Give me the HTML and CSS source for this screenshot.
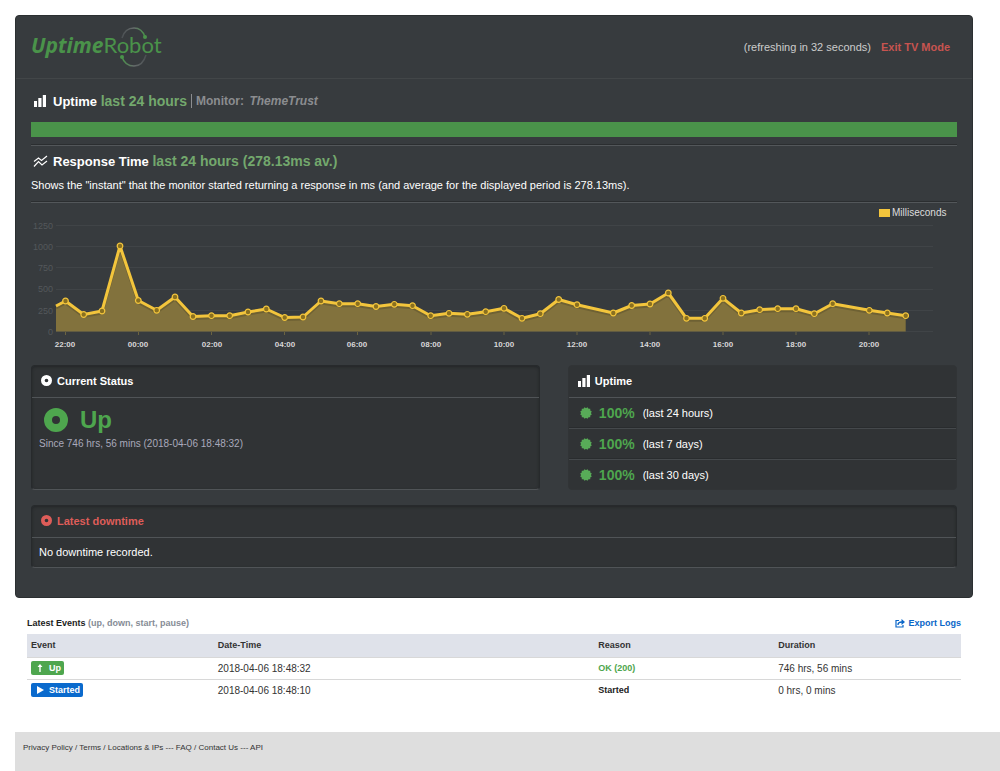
FILE: index.html
```
<!DOCTYPE html>
<html lang="en">
<head>
    <meta charset="UTF-8">
    <meta name="viewport" content="width=device-width, initial-scale=1">
    <title>Uptime Robot</title>
    <link rel="stylesheet" href="styles.css">
</head>
<body>
    <svg class="sprite" aria-hidden="true">
        <symbol id="bars" viewBox="0 0 12 12">
            <path d="M0 6h3v6H0zM4.300 3h3.200v9H4.300zM8.800 0H12v12H8.800z"/>
        </symbol>
        <symbol id="ring" viewBox="0 0 24 24">
            <path fill-rule="evenodd" d="M12 0a12 12 0 1 0 0 24 12 12 0 0 0 0-24zm0 8a4 4 0 1 1 0 8 4 4 0 0 1 0-8z"/>
        </symbol>
        <symbol id="badge" viewBox="0 0 24 24">
            <rect x="3.500" y="3.500" width="17" height="17"/>
            <rect x="3.500" y="3.500" width="17" height="17" transform="rotate(30 12 12)"/>
            <rect x="3.500" y="3.500" width="17" height="17" transform="rotate(60 12 12)"/>
        </symbol>
    </svg>

    <main class="tv">
        <header class="tv-header">
            <svg class="logo" viewBox="0 0 132 42" role="img" aria-label="UptimeRobot">
                <defs>
                    <linearGradient id="arcTop"><stop offset="0" stop-color="#4b5053"/><stop offset="0.500" stop-color="#666c6c"/><stop offset="1" stop-color="#4a934a"/></linearGradient>
                    <linearGradient id="arcBottom"><stop offset="0" stop-color="#4a934a"/><stop offset="0.500" stop-color="#666c6c"/><stop offset="1" stop-color="#4b5053"/></linearGradient>
                </defs>
                <path d="M91 12C93 5 98 2 103 2s9 3 11 9" fill="none" stroke="url(#arcTop)" stroke-width="1.500"/>
                <path d="M91 31c2 6 6 9 12 9s10-4 12-11" fill="none" stroke="url(#arcBottom)" stroke-width="1.500"/>
                <circle cx="114" cy="11" r="2"/>
                <circle cx="91" cy="31" r="2"/>
                <text x="0" y="27"><tspan class="logo-up">Uptime</tspan><tspan class="logo-robot">Robot</tspan></text>
            </svg>
            <div class="tv-mode">
                <span>(refreshing in 32 seconds)</span>
                <a href="#">Exit TV Mode</a>
            </div>
        </header>

        <section class="block">
            <h2>
                <svg class="icon"><use href="#bars"/></svg>
                <span>Uptime <b>last 24 hours</b></span>
                <span class="monitor">Monitor: <i>ThemeTrust</i></span>
            </h2>
            <div class="uptime-bar"></div>
        </section>

        <section class="block response">
            <h2>
                <svg class="icon wide" viewBox="0 0 15 12" fill="none" stroke="#fff">
                    <path d="M1 6.500l4.500-3.500 3 2.500L14 1" stroke-width="1.200"/>
                    <path d="M1 11.500l4.500-5 3.500 3.500 5-4" stroke-width="1.200"/>
                </svg>
                <span>Response Time <b>last 24 hours (278.13ms av.)</b></span>
            </h2>
            <p>Shows the "instant" that the monitor started returning a response in ms (and average for the displayed period is 278.13ms).</p>
        </section>

        <svg class="chart" viewBox="31 203 926 149" role="img" aria-label="Response time in milliseconds">
            <defs>
                <marker id="dot" viewBox="0 0 8 8" refX="4" refY="4" markerWidth="8" markerHeight="8" markerUnits="userSpaceOnUse">
                    <circle cx="4" cy="4" r="2.800" fill="#8a7020" stroke="#f3c53c" stroke-width="1.200"/>
                </marker>
            </defs>
            <path class="grid" d="M56 225.500H933M56 246.500H933M56 267.500H933M56 289.500H933M56 310.500H933M56 331.500H933"/>
            <g class="y-axis">
                <text x="53" y="229">1250</text>
                <text x="53" y="250">1000</text>
                <text x="53" y="271">750</text>
                <text x="53" y="292">500</text>
                <text x="53" y="314">250</text>
                <text x="53" y="335">0</text>
            </g>
            <path class="area" d="M56 306 65.500 301 83.700 314.500 102 311 120 246 138.300 300.500 156.700 310.300 175 297 193 316.500 211.500 315.700 229.700 315.700 248 312 266.300 309 284.700 317.500 303 317 321 301 339.300 303.700 357.700 303.700 376 306.500 394.300 304.300 412.500 305.700 430.700 315.700 449 313.300 467.300 314.300 485.700 311.700 504 308.300 522 318.300 540.300 313.700 558.700 299.500 577 304.700 613.300 313 631.700 305.500 650 304 668.300 293 686.500 318.300 704.700 318.300 723 298.300 741.300 313 759.700 309.700 777.700 308.700 796 308.700 814.300 313.700 832.700 303.700 869.300 310.300 887.300 313 905.700 315.700V331.500H56z"/>
            <polyline class="shade" points="56,308 65.500,303 83.700,316.500 102,313 120,248 138.300,302.500 156.700,312.300 175,299 193,318.500 211.500,317.700 229.700,317.700 248,314 266.300,311 284.700,319.500 303,319 321,303 339.300,305.700 357.700,305.700 376,308.500 394.300,306.300 412.500,307.700 430.700,317.700 449,315.300 467.300,316.300 485.700,313.700 504,310.300 522,320.300 540.300,315.700 558.700,301.500 577,306.700 613.300,315 631.700,307.500 650,306 668.300,295 686.500,320.300 704.700,320.300 723,300.300 741.300,315 759.700,311.700 777.700,310.700 796,310.700 814.300,315.700 832.700,305.700 869.300,312.300 887.300,315 905.700,317.700"/>
            <polyline class="line" points="56,306 65.500,301 83.700,314.500 102,311 120,246 138.300,300.500 156.700,310.300 175,297 193,316.500 211.500,315.700 229.700,315.700 248,312 266.300,309 284.700,317.500 303,317 321,301 339.300,303.700 357.700,303.700 376,306.500 394.300,304.300 412.500,305.700 430.700,315.700 449,313.300 467.300,314.300 485.700,311.700 504,308.300 522,318.300 540.300,313.700 558.700,299.500 577,304.700 613.300,313 631.700,305.500 650,304 668.300,293 686.500,318.300 704.700,318.300 723,298.300 741.300,313 759.700,309.700 777.700,308.700 796,308.700 814.300,313.700 832.700,303.700 869.300,310.300 887.300,313 905.700,315.700"/>
            <path class="ticks" d="M65.500 332v3M138.500 332v3M211.500 332v3M284.500 332v3M357.500 332v3M431 332v3M504 332v3M577 332v3M650 332v3M723 332v3M796 332v3M869 332v3"/>
            <g class="x-axis">
                <text x="65" y="347">22:00</text>
                <text x="138" y="347">00:00</text>
                <text x="212" y="347">02:00</text>
                <text x="285" y="347">04:00</text>
                <text x="357" y="347">06:00</text>
                <text x="431" y="347">08:00</text>
                <text x="504" y="347">10:00</text>
                <text x="577" y="347">12:00</text>
                <text x="650" y="347">14:00</text>
                <text x="723" y="347">16:00</text>
                <text x="796" y="347">18:00</text>
                <text x="869" y="347">20:00</text>
            </g>
            <rect x="879" y="209" width="11" height="8" fill="#f3c53c"/>
            <text class="legend" x="892" y="216">Milliseconds</text>
        </svg>

        <div class="cards">
            <section class="card">
                <h3><svg class="icon round"><use href="#ring"/></svg>Current Status</h3>
                <div class="status">
                    <strong><svg class="icon big"><use href="#ring"/></svg>Up</strong>
                    <span>Since 746 hrs, 56 mins (2018-04-06 18:48:32)</span>
                </div>
            </section>
            <section class="card flat">
                <h3><svg class="icon"><use href="#bars"/></svg>Uptime</h3>
                <ul>
                    <li><svg class="icon"><use href="#badge"/></svg><b>100%</b> (last 24 hours)</li>
                    <li><svg class="icon"><use href="#badge"/></svg><b>100%</b> (last 7 days)</li>
                    <li><svg class="icon"><use href="#badge"/></svg><b>100%</b> (last 30 days)</li>
                </ul>
            </section>
            <section class="card downtime">
                <h3><svg class="icon round"><use href="#ring"/></svg>Latest downtime</h3>
                <p>No downtime recorded.</p>
            </section>
        </div>
    </main>

    <section class="events">
        <div class="events-head">
            <h4>Latest Events <span>(up, down, start, pause)</span></h4>
            <a href="#">
                <svg viewBox="0 0 10 9" width="10" height="9" fill="none" stroke="#0a66c8">
                    <path d="M4 1.500H1v6.500h7V6" stroke-width="1.200"/>
                    <path d="M3 6c0-2 1.500-3 4-3" stroke-width="1.400"/>
                    <path d="M6.500 0L10 3 6.500 6z" fill="#0a66c8" stroke="none"/>
                </svg>
                Export Logs
            </a>
        </div>
        <table>
            <thead>
                <tr><th>Event</th><th>Date-Time</th><th>Reason</th><th>Duration</th></tr>
            </thead>
            <tbody>
                <tr>
                    <td><span class="tag up"><svg viewBox="0 0 8 8"><path d="M4 0L1.500 3H3.300V8H4.700V3H6.500z"/></svg>Up</span></td>
                    <td>2018-04-06 18:48:32</td>
                    <td class="ok">OK (200)</td>
                    <td>746 hrs, 56 mins</td>
                </tr>
                <tr>
                    <td><span class="tag started"><svg viewBox="0 0 8 8"><path d="M1 0L8 4 1 8z"/></svg>Started</span></td>
                    <td>2018-04-06 18:48:10</td>
                    <td class="start">Started</td>
                    <td>0 hrs, 0 mins</td>
                </tr>
            </tbody>
        </table>
    </section>

    <footer>
        <a href="#">Privacy Policy</a> / <a href="#">Terms</a> / <a href="#">Locations &amp; IPs</a> --- <a href="#">FAQ</a> / <a href="#">Contact Us</a> --- <a href="#">API</a>
    </footer>
</body>
</html>
```
FILE: styles.css
```
* {
    box-sizing: border-box;
}
body {
    margin: 0;
    min-height: 100vh;
    display: flex;
    flex-direction: column;
    background: #fff;
    color: #333;
    font-family: "Liberation Sans", Arial, sans-serif;
    font-size: 11px;
}
h2, h3, h4, p, ul {
    margin: 0;
    padding: 0;
}
a {
    color: inherit;
    text-decoration: none;
}
.sprite {
    position: absolute;
    width: 0;
    height: 0;
}
.icon {
    width: 12px;
    height: 12px;
    fill: currentColor;
    flex: none;
}

/* dark dashboard */
.tv {
    margin: 15px 27px 0 15px;
    padding: 0 15px 29px;
    background: #373b3e;
    border: 1px solid #2b2f31;
    border-radius: 4px;
    color: #fff;
}
.tv-header {
    display: flex;
    justify-content: space-between;
    align-items: center;
    height: 63px;
    margin: 0 -15px;
    padding: 0 22px 0 15px;
    border-bottom: 1px solid #424648;
}
.logo {
    width: 132px;
    height: 42px;
    fill: #4a934a;
}
.logo-up {
    font-family: "Open Sans", sans-serif;
    font-size: 21px;
    font-weight: 700;
    font-style: italic;
}
.logo-robot {
    font-family: Lato, sans-serif;
    font-size: 22px;
    font-weight: 400;
}
.tv-mode {
    display: flex;
    gap: 10px;
    color: #ccc;
}
.tv-mode a {
    color: #c75450;
    font-weight: bold;
}
h2 {
    display: flex;
    align-items: center;
    height: 16px;
    padding-left: 3px;
    font-size: 13px;
}
h2 .icon {
    margin-right: 7px;
}
h2 .wide {
    width: 15px;
    fill: none;
    margin: 0 5px 0 -1px;
}
h2 b {
    color: #73a86d;
    font-size: 14px;
}
.monitor {
    margin-left: 4px;
    padding-left: 4px;
    border-left: 1px solid #8b8d90;
    color: #8b8d90;
    font-size: 12px;
}
.monitor i {
    margin-left: 2px;
}
.block {
    padding: 14px 0 8px;
    border-bottom: 1px solid #53575a;
    box-shadow: inset 0 -1px #2b2e30;
}
.uptime-bar {
    height: 15px;
    margin-top: 13px;
    background: #4a934a;
}
.response {
    padding: 7px 0 10px;
}
.response p {
    margin-top: 9px;
    line-height: 14px;
}
.chart {
    display: block;
    width: 100%;
    font-size: 9px;
}
.grid {
    stroke: #404447;
}
.y-axis {
    fill: #54585b;
    text-anchor: end;
}
.x-axis {
    fill: #d8d8d8;
    font-size: 8px;
    font-weight: bold;
    text-anchor: middle;
}
.area {
    fill: #82723d;
}
.line {
    fill: none;
    stroke: #f3c53c;
    stroke-width: 3px;
    stroke-linejoin: round;
    marker-mid: url(#dot);
    marker-end: url(#dot);
}
.shade {
    fill: none;
    stroke: #000;
    stroke-opacity: 0.15;
    stroke-width: 3px;
}
.ticks {
    stroke: #6b6340;
}
.legend {
    fill: #ddd;
    font-size: 10px;
}

.cards {
    display: grid;
    grid-template-columns: 17fr 13fr;
    gap: 15px 28px;
    margin-top: 13px;
}
.card {
    background: #303335;
    border: 1px solid #272a2c;
    border-bottom-color: #505457;
    border-radius: 4px;
    box-shadow: inset 0 1px 3px #222527;
}
.card.flat {
    border-color: #313436;
    box-shadow: none;
}
h3 {
    display: flex;
    align-items: center;
    gap: 5px;
    height: 32px;
    padding: 0 9px 2px;
    border-bottom: 1px solid #505457;
    font-size: 11px;
}
h3 .round {
    width: 11px;
    height: 11px;
}
.status {
    height: 91px;
    padding: 8px 7px;
    color: #a9a9bb;
    font-size: 10px;
}
.status strong {
    display: flex;
    align-items: center;
    gap: 12px;
    height: 28px;
    padding-left: 5px;
    margin-bottom: 4px;
    color: #4ea64e;
    font-size: 24px;
}
.status .big {
    width: 24px;
    height: 24px;
}
.flat li {
    display: flex;
    align-items: center;
    height: 31px;
    padding: 0 11px;
    border-bottom: 1px solid #45494c;
    box-shadow: inset 0 -1px #292c2e;
}
.flat li:last-child {
    height: 29px;
    border: 0;
    box-shadow: none;
}
.flat li .icon {
    color: #58ab58;
}
.flat li b {
    margin: 0 8px 0 7px;
    color: #4ea64e;
    font-size: 14px;
}
.downtime {
    grid-column: 1 / -1;
}
.downtime h3 {
    color: #de5d59;
}
.downtime p {
    padding: 0 7px;
    line-height: 29px;
}

/* event log */
.events {
    margin: 18px 39px 31px 27px;
    font-size: 10px;
}
.events-head {
    display: flex;
    justify-content: space-between;
    align-items: center;
    height: 18px;
    padding-bottom: 4px;
    font-size: 9px;
}
h4 {
    color: #222;
    font-size: 9px;
}
h4 span {
    color: #868c96;
}
.events-head a {
    display: flex;
    align-items: center;
    gap: 3px;
    color: #0a66c8;
    font-weight: bold;
}
table {
    width: 100%;
    table-layout: fixed;
    border-collapse: collapse;
}
th, td {
    height: 23px;
    padding: 0 4px;
    text-align: left;
    border-bottom: 1px solid #d8d8d8;
}
td {
    height: 22px;
}
th {
    width: 20%;
    background: #dfe2ea;
    font-size: 9px;
}
th:nth-child(2) {
    width: auto;
}
th:nth-child(3) {
    width: 180px;
}
tbody tr:last-child td {
    border: 0;
}
.ok, .start {
    color: #222;
    font-size: 9px;
    font-weight: bold;
}
.ok {
    color: #4ea64e;
}
.tag {
    display: inline-flex;
    align-items: center;
    gap: 5px;
    height: 14px;
    padding: 0 3px 0 5px;
    border-radius: 2px;
    color: #fff;
    font-size: 9px;
    font-weight: bold;
    vertical-align: middle;
}
.tag svg {
    width: 8px;
    height: 8px;
    fill: #fff;
}
.up {
    background: #4ea64e;
}
.started {
    background: #0a6acd;
}
footer {
    flex: 1;
    margin-left: 15px;
    padding: 11px 8px;
    background: #dedede;
    font-size: 8px;
}
```
